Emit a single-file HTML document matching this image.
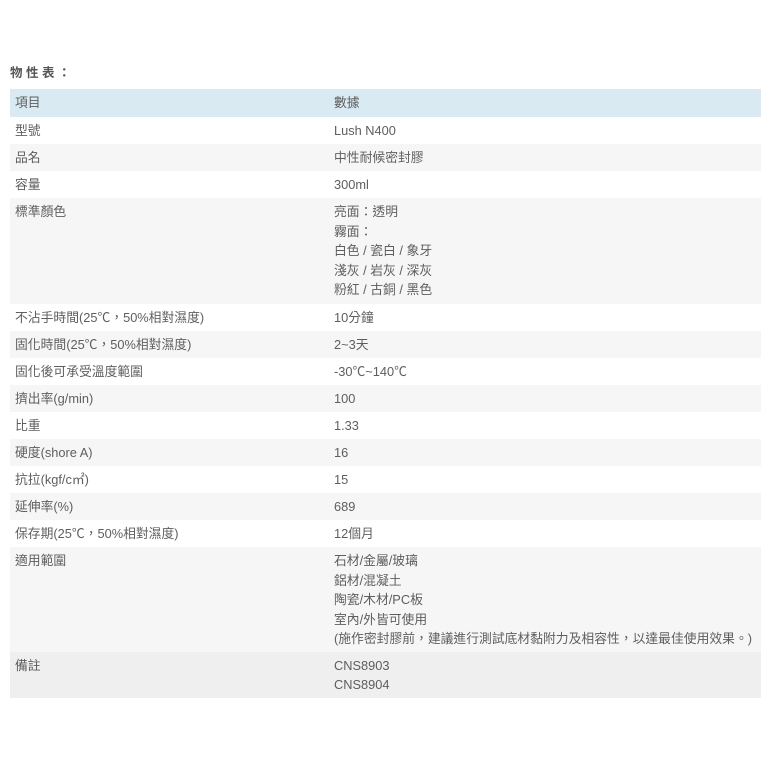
<!DOCTYPE html>
<html><head><meta charset="utf-8"><style>
body{margin:0;background:#fff;font-family:"Liberation Sans","Noto Sans CJK TC",sans-serif;color:#5e5e5e;font-size:12.8px;}
.t{position:absolute;left:10px;top:62px;font-size:12.5px;font-weight:bold;letter-spacing:3.5px;color:#555;}
table{position:absolute;left:10px;top:89px;width:751px;border-collapse:collapse;}
td{padding:0 0 0 5px;vertical-align:top;line-height:19.5px;}
td:first-child{width:314px;}
tr{height:27px;}
tr td{padding-top:4px;padding-bottom:3px;}
tr.h{background:#d9eaf3;height:28px;}
tr.g{background:#f6f6f6;}
tr.d{background:#efefef;}
</style></head><body>
<div class="t">物性表：</div>
<table>
<tr class="h"><td>項目</td><td>數據</td></tr>
<tr><td>型號</td><td>Lush N400</td></tr>
<tr class="g"><td>品名</td><td>中性耐候密封膠</td></tr>
<tr><td>容量</td><td>300ml</td></tr>
<tr class="g" style="height:106px"><td>標準顏色</td><td>亮面：透明<br>霧面：<br>白色 / 瓷白 / 象牙<br>淺灰 / 岩灰 / 深灰<br>粉紅 / 古銅 / 黑色</td></tr>
<tr><td>不沾手時間(25℃，50%相對濕度)</td><td>10分鐘</td></tr>
<tr class="g"><td>固化時間(25℃，50%相對濕度)</td><td>2~3天</td></tr>
<tr><td>固化後可承受溫度範圍</td><td>-30℃~140℃</td></tr>
<tr class="g"><td>擠出率(g/min)</td><td>100</td></tr>
<tr><td>比重</td><td>1.33</td></tr>
<tr class="g"><td>硬度(shore A)</td><td>16</td></tr>
<tr><td>抗拉(kgf/c㎡)</td><td>15</td></tr>
<tr class="g"><td>延伸率(%)</td><td>689</td></tr>
<tr><td>保存期(25℃，50%相對濕度)</td><td>12個月</td></tr>
<tr class="g" style="height:104px"><td>適用範圍</td><td>石材/金屬/玻璃<br>鋁材/混凝土<br>陶瓷/木材/PC板<br>室內/外皆可使用<br>(施作密封膠前，建議進行測試底材黏附力及相容性，以達最佳使用效果。)</td></tr>
<tr class="d" style="height:46px"><td>備註</td><td>CNS8903<br>CNS8904</td></tr>
</table>
</body></html>
